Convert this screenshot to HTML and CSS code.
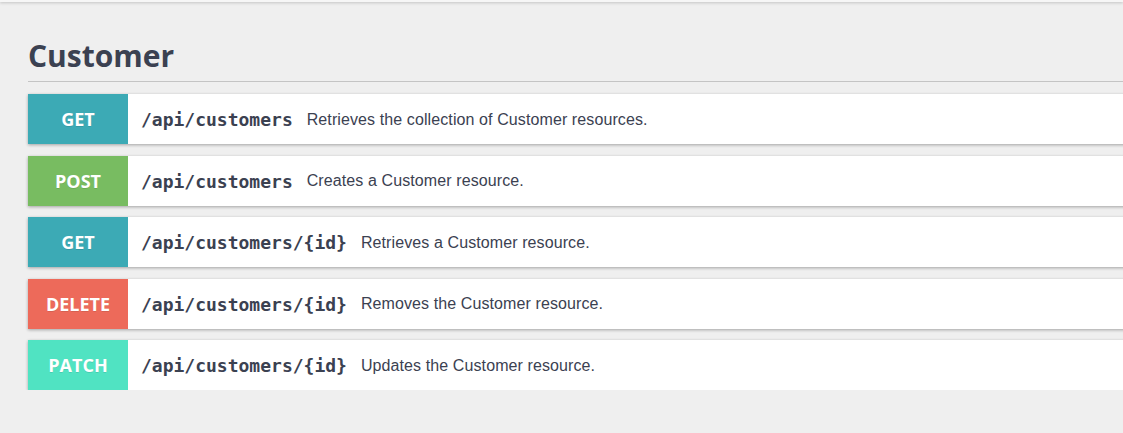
FILE: index.html
```html
<!DOCTYPE html>
<html lang="en">
<head>
<meta charset="utf-8">
<title>Customer</title>
<link rel="stylesheet" href="styles.css">
</head>
<body>
<div class="topbar"></div>
<section class="tag">
  <h2 class="tag-title">Customer</h2>
  <div class="ops">
    <div class="op">
      <span class="method get">GET</span>
      <span class="path">/api/customers</span>
      <span class="desc">Retrieves the collection of Customer resources.</span>
    </div>
    <div class="op">
      <span class="method post">POST</span>
      <span class="path">/api/customers</span>
      <span class="desc">Creates a Customer resource.</span>
    </div>
    <div class="op">
      <span class="method get">GET</span>
      <span class="path">/api/customers/{id}</span>
      <span class="desc">Retrieves a Customer resource.</span>
    </div>
    <div class="op">
      <span class="method delete">DELETE</span>
      <span class="path">/api/customers/{id}</span>
      <span class="desc">Removes the Customer resource.</span>
    </div>
    <div class="op">
      <span class="method patch">PATCH</span>
      <span class="path">/api/customers/{id}</span>
      <span class="desc">Updates the Customer resource.</span>
    </div>
  </div>
</section>
</body>
</html>
```
FILE: styles.css
```css
html, body {
  margin: 0;
  padding: 0;
  background: #efefef;
  overflow: hidden;
}
.topbar {
  height: 2px;
  background: #f6f6f6;
  box-shadow: 0 1px 3px rgba(0, 0, 0, 0.22);
}
.tag {
  padding-left: 28px;
  margin-right: -60px;
}
.tag-title {
  margin: 34px 0 12px 0;
  padding-bottom: 6px;
  font-family: "Open Sans", sans-serif;
  font-weight: 700;
  font-size: 30px;
  line-height: 39px;
  color: #3b4151;
  border-bottom: 1px solid #c4c4c4;
}
.ops {
  display: flex;
  flex-direction: column;
  gap: 11.5px;
}
.op {
  display: flex;
  align-items: center;
  height: 50px;
  padding-top: 1px;
  box-sizing: border-box;
  background: #fff;
  box-shadow: 0 1px 3px rgba(0, 0, 0, 0.32);
}
.method {
  flex: 0 0 100px;
  align-self: stretch;
  margin-top: -1px;
  display: flex;
  align-items: center;
  justify-content: center;
  font-family: "Open Sans", sans-serif;
  font-weight: 700;
  font-size: 18px;
  color: #fff;
  text-shadow: 0 1px 0 rgba(0, 0, 0, 0.1);
}
.get { background: #3caab5; }
.post { background: #78bc61; }
.delete { background: #ed6a5a; }
.patch { background: #50e3c2; }
.path {
  margin-left: 13px;
  font-family: "DejaVu Sans Mono", monospace;
  font-weight: 700;
  font-size: 18px;
  color: #3b4151;
}
.desc {
  margin-left: 14px;
  font-family: "Liberation Sans", Arial, sans-serif;
  font-size: 16px;
  letter-spacing: 0.1px;
  color: #3b4151;
}
```
